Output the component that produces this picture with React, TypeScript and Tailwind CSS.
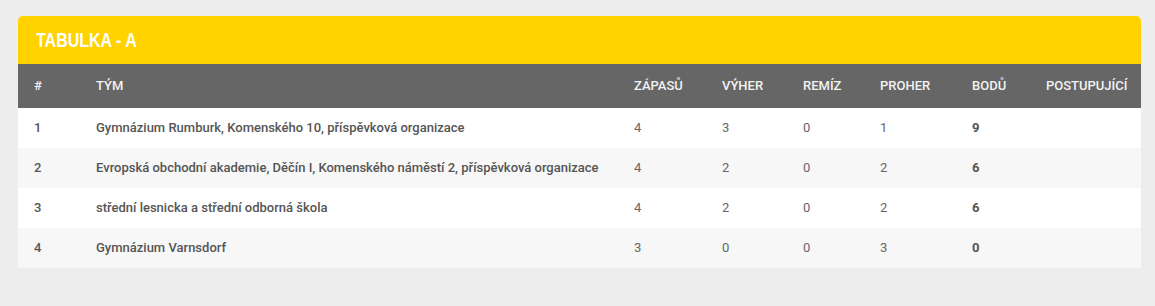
import React from "react";

const rows = [
  { pos: 1, team: "Gymnázium Rumburk, Komenského 10, příspěvková organizace", played: 4, won: 3, draw: 0, lost: 1, points: 9 },
  { pos: 2, team: "Evropská obchodní akademie, Děčín I, Komenského náměstí 2, příspěvková organizace", played: 4, won: 2, draw: 0, lost: 2, points: 6 },
  { pos: 3, team: "střední lesnicka a střední odborná škola", played: 4, won: 2, draw: 0, lost: 2, points: 6 },
  { pos: 4, team: "Gymnázium Varnsdorf", played: 3, won: 0, draw: 0, lost: 3, points: 0 },
];

const App: React.FC = () => {
  return (
    <div className="min-h-[306px] w-full bg-[#ededed] px-[18px] pt-[16px] pb-[38px] [font-family:Roboto,'Liberation_Sans',sans-serif]">
      <div className="w-[1123px] overflow-hidden rounded-t-[5px]">
        {/* Heading */}
        <div className="flex h-[48px] items-center bg-[#ffd200] px-[18px]">
          <h2 className="origin-left scale-x-[0.8] text-[20px] font-bold uppercase text-white [font-family:'Liberation_Sans',sans-serif]">
            Tabulka - A
          </h2>
        </div>

        <table className="w-full table-fixed border-collapse text-[13px]">
          <colgroup>
            <col className="w-[78px]" />
            <col className="w-[538px]" />
            <col className="w-[88px]" />
            <col className="w-[81px]" />
            <col className="w-[77px]" />
            <col className="w-[92px]" />
            <col className="w-[74px]" />
            <col />
          </colgroup>
          <thead>
            <tr className="h-[44px] bg-[#666666] text-left uppercase text-[#f2f2f2]">
              <th className="pl-[16px] font-medium">#</th>
              <th className="font-medium">Tým</th>
              <th className="font-medium">Zápasů</th>
              <th className="font-medium">Výher</th>
              <th className="font-medium">Remíz</th>
              <th className="font-medium">Proher</th>
              <th className="font-medium">Bodů</th>
              <th className="font-medium">Postupující</th>
            </tr>
          </thead>
          <tbody>
            {rows.map((row, index) => (
              <tr key={row.pos} className={`h-[40px] text-[#666666] ${index % 2 === 1 ? "bg-[#f7f7f7]" : "bg-white"}`}>
                <td className="pl-[16px] font-medium text-[#555555]">{row.pos}</td>
                <td className="font-medium text-[#555555]">{row.team}</td>
                <td>{row.played}</td>
                <td>{row.won}</td>
                <td>{row.draw}</td>
                <td>{row.lost}</td>
                <td className="font-bold text-[#555555]">{row.points}</td>
                <td></td>
              </tr>
            ))}
          </tbody>
        </table>
      </div>
    </div>
  );
};

export default App;
